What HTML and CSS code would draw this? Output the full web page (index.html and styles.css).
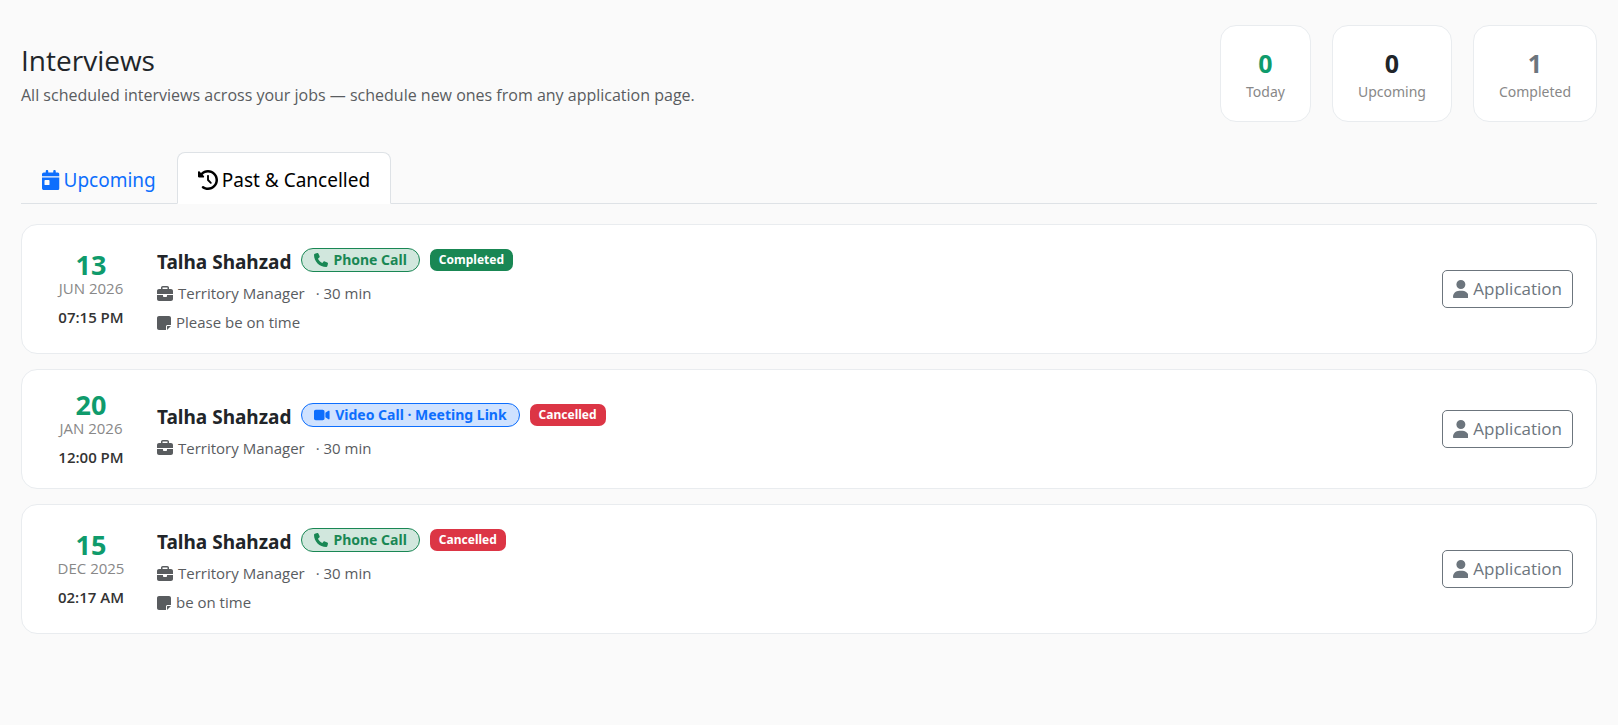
FILE: index.html
```html
<!DOCTYPE html>
<html lang="en">
<head>
    <meta charset="UTF-8">
    <meta name="viewport" content="width=device-width, initial-scale=1.0">
    <title>Interviews</title>
    <link rel="stylesheet" href="styles.css">
</head>
<body>

<!-- Icons -->
<svg class="sprite" aria-hidden="true">
    <symbol id="i-calendar" viewBox="0 0 448 512"><path d="M128 0c17.7 0 32 14.3 32 32V64H288V32c0-17.7 14.3-32 32-32s32 14.3 32 32V64h48c26.5 0 48 21.5 48 48v48H0V112C0 85.5 21.5 64 48 64H96V32c0-17.7 14.3-32 32-32zM0 192H448V464c0 26.5-21.5 48-48 48H48c-26.5 0-48-21.5-48-48V192zm80 64c-8.8 0-16 7.2-16 16v96c0 8.8 7.2 16 16 16h96c8.8 0 16-7.2 16-16V272c0-8.8-7.2-16-16-16H80z"/></symbol>
    <symbol id="i-history" viewBox="0 0 512 512"><path d="M75 75L41 41C25.9 25.9 0 36.6 0 57.9V168c0 13.3 10.7 24 24 24H134.1c21.4 0 32.1-25.9 17-41l-30.8-30.8C155 85.5 203 64 256 64c106 0 192 86 192 192s-86 192-192 192c-40.8 0-78.6-12.7-109.7-34.4c-14.5-10.1-34.4-6.6-44.6 7.9s-6.6 34.4 7.9 44.6C151.2 495 201.7 512 256 512c141.4 0 256-114.6 256-256S397.4 0 256 0C185.3 0 121.3 28.7 75 75zm181 53c-13.3 0-24 10.7-24 24V256c0 6.4 2.5 12.5 7 17l72 72c9.4 9.4 24.6 9.4 33.9 0s9.4-24.6 0-33.9l-65-65V152c0-13.3-10.7-24-24-24z"/></symbol>
    <symbol id="i-phone" viewBox="0 0 512 512"><path d="M164.9 24.6c-7.7-18.6-28-28.5-47.4-23.2l-88 24C12.1 30.2 0 46 0 64C0 311.4 200.6 512 448 512c18 0 33.8-12.1 38.6-29.5l24-88c5.3-19.4-4.6-39.7-23.2-47.4l-96-40c-16.3-6.8-35.2-2.1-46.3 11.6L304.7 368C234.3 334.7 177.3 277.7 144 207.3L193.3 167c13.7-11.2 18.4-30 11.6-46.3l-40-96z"/></symbol>
    <symbol id="i-video" viewBox="0 0 576 512"><path d="M0 128C0 92.7 28.7 64 64 64H320c35.3 0 64 28.7 64 64V384c0 35.3-28.7 64-64 64H64c-35.3 0-64-28.7-64-64V128zM559.1 99.8c10.4 5.6 16.9 16.4 16.9 28.2V384c0 11.8-6.5 22.6-16.9 28.2s-23 5-32.9-1.6l-96-64L416 337.1V320 192 174.9l14.2-9.5 96-64c9.8-6.5 22.4-7.2 32.9-1.6z"/></symbol>
    <symbol id="i-briefcase" viewBox="0 0 512 512"><path d="M184 48H328c4.4 0 8 3.6 8 8V96H176V56c0-4.4 3.6-8 8-8zm-56 8V96H64C28.7 96 0 124.7 0 160v96H192 320 512V160c0-35.3-28.7-64-64-64H384V56c0-30.9-25.1-56-56-56H184c-30.9 0-56 25.1-56 56zM512 288H320v32c0 17.7-14.3 32-32 32H224c-17.7 0-32-14.3-32-32V288H0V416c0 35.3 28.7 64 64 64H448c35.3 0 64-28.7 64-64V288z"/></symbol>
    <symbol id="i-note" viewBox="0 0 448 512"><path d="M64 32C28.7 32 0 60.7 0 96V416c0 35.3 28.7 64 64 64H288V368c0-26.5 21.5-48 48-48H448V96c0-35.3-28.7-64-64-64H64zM448 352H402.7 336c-8.8 0-16 7.2-16 16v66.7V480l32-32 64-64 32-32z"/></symbol>
    <symbol id="i-user" viewBox="0 0 448 512"><path d="M224 256A128 128 0 1 0 224 0a128 128 0 1 0 0 256zm-45.7 48C79.8 304 0 383.8 0 482.3C0 498.7 13.3 512 29.7 512H418.3c16.4 0 29.7-13.3 29.7-29.7C448 383.8 368.2 304 269.7 304H178.3z"/></symbol>
</svg>

<main class="page">
    <!-- Header -->
    <header class="page-header">
        <div class="page-title">
            <h1>Interviews</h1>
            <p class="subtitle">All scheduled interviews across your jobs — schedule new ones from any application page.</p>
        </div>
        <div class="stats">
            <div class="stat">
                <div class="stat-number green">0</div>
                <div class="stat-label">Today</div>
            </div>
            <div class="stat">
                <div class="stat-number">0</div>
                <div class="stat-label">Upcoming</div>
            </div>
            <div class="stat">
                <div class="stat-number gray">1</div>
                <div class="stat-label">Completed</div>
            </div>
        </div>
    </header>

    <!-- Tabs -->
    <div class="tabs" role="tablist">
        <button type="button" class="tab" role="tab" aria-selected="false">
            <svg class="icon icon-narrow"><use href="#i-calendar"/></svg>Upcoming
        </button>
        <button type="button" class="tab active" role="tab" aria-selected="true">
            <svg class="icon"><use href="#i-history"/></svg>Past &amp; Cancelled
        </button>
    </div>

    <!-- Interview list -->
    <div class="interview-list">
        <article class="interview-card">
            <div class="date-block">
                <div class="day">13</div>
                <div class="month">JUN 2026</div>
                <div class="time">07:15 PM</div>
            </div>
            <div class="details">
                <div class="name-row">
                    <h2>Talha Shahzad</h2>
                    <span class="type-badge phone"><svg class="icon"><use href="#i-phone"/></svg>Phone Call</span>
                    <span class="status completed">Completed</span>
                </div>
                <p class="meta"><svg class="icon"><use href="#i-briefcase"/></svg>Territory Manager <span class="duration">· 30 min</span></p>
                <p class="meta"><svg class="icon icon-narrow"><use href="#i-note"/></svg>Please be on time</p>
            </div>
            <a href="#" class="app-button"><svg class="icon icon-narrow"><use href="#i-user"/></svg>Application</a>
        </article>

        <article class="interview-card">
            <div class="date-block">
                <div class="day">20</div>
                <div class="month">JAN 2026</div>
                <div class="time">12:00 PM</div>
            </div>
            <div class="details">
                <div class="name-row">
                    <h2>Talha Shahzad</h2>
                    <span class="type-badge video"><svg class="icon icon-wide"><use href="#i-video"/></svg>Video Call · Meeting Link</span>
                    <span class="status cancelled">Cancelled</span>
                </div>
                <p class="meta"><svg class="icon"><use href="#i-briefcase"/></svg>Territory Manager <span class="duration">· 30 min</span></p>
            </div>
            <a href="#" class="app-button"><svg class="icon icon-narrow"><use href="#i-user"/></svg>Application</a>
        </article>

        <article class="interview-card">
            <div class="date-block">
                <div class="day">15</div>
                <div class="month">DEC 2025</div>
                <div class="time">02:17 AM</div>
            </div>
            <div class="details">
                <div class="name-row">
                    <h2>Talha Shahzad</h2>
                    <span class="type-badge phone"><svg class="icon"><use href="#i-phone"/></svg>Phone Call</span>
                    <span class="status cancelled">Cancelled</span>
                </div>
                <p class="meta"><svg class="icon"><use href="#i-briefcase"/></svg>Territory Manager <span class="duration">· 30 min</span></p>
                <p class="meta"><svg class="icon icon-narrow"><use href="#i-note"/></svg>be on time</p>
            </div>
            <a href="#" class="app-button"><svg class="icon icon-narrow"><use href="#i-user"/></svg>Application</a>
        </article>
    </div>
</main>

</body>
</html>
```
FILE: styles.css
```css
* {
    margin: 0;
    padding: 0;
    box-sizing: border-box;
}

body {
    background-color: #fafafa;
    color: #212529;
    font-family: 'Open Sans', 'Noto Sans', sans-serif;
    font-size: 16px;
    line-height: 26px;
}

.sprite {
    display: none;
}

.page {
    padding: 25px 21px;
}

/* Icons */
.icon {
    width: 1em;
    height: 1em;
    fill: currentColor;
    flex-shrink: 0;
}

.icon-narrow {
    width: 0.875em;
}

.icon-wide {
    width: 1.125em;
}

/* Header */
.page-header {
    display: flex;
    justify-content: space-between;
    align-items: center;
    margin-bottom: 30px;
}

.page-title {
    padding-top: 2px;
}

h1 {
    font-size: 28px;
    font-weight: 400;
    line-height: 36px;
    margin-bottom: 4px;
}

.subtitle {
    color: #595c5f;
}

.stats {
    display: flex;
    gap: 21px;
}

.stat {
    background: #fff;
    border: 1px solid #e9ecef;
    border-radius: 16px;
    padding: 20px 25px 17px;
    text-align: center;
}

.stat-number {
    font-size: 25px;
    font-weight: 700;
    line-height: 34px;
}

.stat-label {
    color: #888;
    font-family: 'Noto Sans', sans-serif;
    font-size: 14px;
    line-height: 24px;
}

.green {
    color: #0f9b6c;
}

.gray {
    color: #6c757d;
}

/* Tabs */
.tabs {
    display: flex;
    border-bottom: 1px solid #dee2e6;
    margin-bottom: 20px;
}

.tab {
    display: flex;
    align-items: center;
    gap: 4px;
    padding: 14px 20px 10px;
    margin-bottom: -1px;
    background: none;
    border: 1px solid transparent;
    border-radius: 8px 8px 0 0;
    color: #0d6efd;
    font-family: 'Noto Sans', sans-serif;
    font-size: 19px;
    line-height: 26px;
    cursor: pointer;
}

.tab .icon {
    font-size: 20px;
}

.tab.active {
    background: #fff;
    border-color: #dee2e6 #dee2e6 #fff;
    color: #000;
}

/* Interview cards */
.interview-list {
    display: flex;
    flex-direction: column;
    gap: 15px;
}

.interview-card {
    display: flex;
    align-items: center;
    gap: 20px;
    background: #fff;
    border: 1px solid #e9ecef;
    border-radius: 16px;
    padding: 20px 23px;
}

.date-block {
    width: 92px;
    text-align: center;
}

.day {
    color: #0f9b6c;
    font-size: 27px;
    font-weight: 700;
    line-height: 29px;
}

.month {
    color: #888;
    font-size: 15px;
    line-height: 19px;
}

.time {
    color: #333;
    font-size: 15px;
    font-weight: 600;
    line-height: 22px;
    margin-top: 8px;
}

.details {
    flex: 1;
    padding-top: 3px;
}

.name-row {
    display: flex;
    align-items: flex-start;
    gap: 10px;
    margin-bottom: 7px;
}

h2 {
    font-family: 'Noto Sans', sans-serif;
    font-size: 19px;
    font-weight: 700;
    line-height: 28px;
}

.type-badge {
    display: flex;
    align-items: center;
    gap: 5px;
    border: 1px solid;
    border-radius: 20px;
    padding: 0 12px;
    font-family: 'Noto Sans', sans-serif;
    font-size: 14px;
    font-weight: 700;
    line-height: 22px;
}

.phone {
    background: #d1e7dd;
    color: #198754;
}

.video {
    background: #cfe2ff;
    color: #0d6efd;
}

.status {
    border-radius: 7px;
    margin-top: 1px;
    padding: 1px 9px;
    color: #fff;
    font-family: 'Noto Sans', sans-serif;
    font-size: 12px;
    font-weight: 700;
    line-height: 20px;
}

.completed {
    background: #198754;
}

.cancelled {
    background: #dc3545;
}

.meta {
    display: flex;
    align-items: center;
    gap: 5px;
    color: #595c5f;
    font-size: 15px;
    line-height: 21px;
}

.meta + .meta {
    margin-top: 8px;
}

.meta .icon {
    font-size: 16px;
}

.duration {
    margin-left: 6px;
}

.app-button {
    display: flex;
    align-items: center;
    gap: 5px;
    border: 1px solid #6c757d;
    border-radius: 5px;
    padding: 5px 10px;
    color: #6c757d;
    font-size: 17px;
    line-height: 26px;
    text-decoration: none;
}

.app-button .icon {
    font-size: 18px;
}
```
